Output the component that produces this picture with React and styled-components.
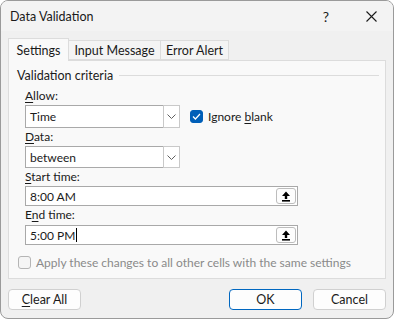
import React from "react";
import styled, { createGlobalStyle } from "styled-components";

const Global = createGlobalStyle`
  html, body { margin: 0; padding: 0; background: #ffffff; }
  body { font-family: Lato, "Noto Sans", sans-serif; font-size: 12px; color: #1b1b1b; }
  * { box-sizing: border-box; }
`;

const Window = styled.div`
  width: 394px;
  height: 319px;
  border: 1px solid #9a9a9a;
  border-radius: 8px;
  background: #f0f0f0;
  overflow: hidden;
  display: flex;
  flex-direction: column;
`;

const TitleBar = styled.div`
  height: 30px;
  display: flex;
  align-items: center;
  padding-left: 9px;
  background: #f3f3f3;
`;

const Title = styled.div`
  flex: 1;
  font-size: 12.5px;
  color: #1a1a1a;
`;

const TitleButton = styled.div`
  width: ${(p) => p.$w || 46}px;
  height: 30px;
  display: flex;
  align-items: center;
  justify-content: center;
  font-size: 14px;
  color: #1a1a1a;
`;

const Content = styled.div`
  flex: 1;
  display: flex;
  flex-direction: column;
  padding: 7px 7px 0 7px;
`;

const TabStrip = styled.div`
  display: flex;
  align-items: flex-end;
  height: 22px;
  position: relative;
  z-index: 1;
`;

const Tab = styled.div`
  height: ${(p) => (p.$active ? 23 : 20)}px;
  width: ${(p) => p.$w}px;
  display: flex;
  align-items: center;
  justify-content: center;
  border: 1px solid #dcdcdc;
  border-bottom: ${(p) => (p.$active ? "none" : "1px solid #dcdcdc")};
  border-left: ${(p) => (p.$first || p.$active ? "1px solid #dcdcdc" : "none")};
  background: ${(p) => (p.$active ? "#f9f9f9" : "#f4f4f4")};
  margin-bottom: ${(p) => (p.$active ? -1 : 0)}px;
  font-size: 12.5px;
  color: #1a1a1a;
`;

const Panel = styled.div`
  width: 378px;
  height: 219px;
  border: 1px solid #dcdcdc;
  background: #f9f9f9;
  padding: 6px 0 0 8px;
  display: flex;
  flex-direction: column;
`;

const GroupHeader = styled.div`
  display: flex;
  align-items: center;
  height: 16px;
  gap: 6px;
  padding-right: 6px;
  font-size: 12.5px;
  &::after {
    content: "";
    flex: 1;
    height: 1px;
    background: #dcdcdc;
  }
`;

const Indented = styled.div`
  padding-left: 8px;
  display: flex;
  flex-direction: column;
`;

const Label = styled.div`
  height: 16px;
  line-height: 16px;
  margin-top: ${(p) => p.$mt || 0}px;
  margin-bottom: ${(p) => p.$mb || 1}px;
  color: #1a1a1a;
`;

const U = styled.span`
  text-decoration: underline;
  text-underline-offset: 2px;
`;

const Row = styled.div`
  display: flex;
  align-items: center;
  gap: 10px;
`;

const Select = styled.div`
  width: 155px;
  height: ${(p) => p.$h || 22}px;
  border: 1px solid #a9a9a9;
  background: #ffffff;
  display: flex;
  align-items: center;
  padding-left: 4px;
`;

const SelectText = styled.div`
  flex: 1;
`;

const DropButton = styled.div`
  width: 17px;
  height: calc(100% + 2px);
  margin-right: -1px;
  border: 1px solid #c9c9c9;
  background: #ffffff;
  display: flex;
  align-items: center;
  justify-content: center;
`;

const Check = styled.div`
  width: 13px;
  height: 13px;
  border-radius: 3px;
  background: ${(p) => (p.$checked ? "#005fb8" : "#f5f5f5")};
  border: 1px solid ${(p) => (p.$checked ? "#005fb8" : "#b5b5b5")};
  display: flex;
  align-items: center;
  justify-content: center;
`;

const CheckRow = styled.div`
  display: flex;
  align-items: center;
  gap: 5px;
  color: ${(p) => (p.$disabled ? "#8a8a8a" : "#1a1a1a")};
`;

const TextBox = styled.div`
  width: 273px;
  height: 20px;
  border: 1px solid #a9a9a9;
  background: #ffffff;
  display: flex;
  align-items: center;
  padding-left: 4px;
  padding-right: 1px;
`;

const BoxText = styled.div`
  flex: 1;
  display: flex;
  align-items: center;
`;

const Caret = styled.span`
  display: inline-block;
  width: 1px;
  height: 14px;
  background: #000;
  margin-left: 1px;
`;

const RefButton = styled.div`
  width: 20px;
  height: 16px;
  border: 1px solid #bdbdbd;
  border-radius: 3px;
  background: #fdfdfd;
  display: flex;
  align-items: center;
  justify-content: center;
`;

const ApplyWrap = styled.div`
  margin-top: 10px;
  padding-left: 1px;
`;

const ButtonRow = styled.div`
  display: flex;
  align-items: center;
  margin-top: 10px;
`;

const Button = styled.div`
  width: 73px;
  height: 21px;
  border: 1px solid ${(p) => (p.$primary ? "#0067c0" : "#d0d0d0")};
  border-radius: 4px;
  background: #fdfdfd;
  display: flex;
  align-items: center;
  justify-content: center;
  margin-left: ${(p) => p.$ml || 0}px;
  font-size: 12.5px;
  color: #1a1a1a;
`;

const Chevron = () => (
  <svg width="9" height="5" viewBox="0 0 9 5">
    <path d="M0.5 0.5 L4.5 4.5 L8.5 0.5" fill="none" stroke="#606060" strokeWidth="1" />
  </svg>
);

const UpArrow = () => (
  <svg width="10" height="11" viewBox="0 0 10 11">
    <path d="M5 0.5 L9 5 L6.2 5 L6.2 8 L3.8 8 L3.8 5 L1 5 Z" fill="#000" />
    <rect x="1" y="9" width="8" height="1.6" fill="#000" />
  </svg>
);

const Tick = () => (
  <svg width="9" height="7" viewBox="0 0 9 7">
    <path d="M1 3.5 L3.4 6 L8 1" fill="none" stroke="#ffffff" strokeWidth="1.2" />
  </svg>
);

const CloseIcon = () => (
  <svg width="11" height="11" viewBox="0 0 11 11">
    <path d="M0.5 0.5 L10.5 10.5 M10.5 0.5 L0.5 10.5" stroke="#1a1a1a" strokeWidth="1.1" />
  </svg>
);

export default function App() {
  return (
    <>
      <Global />
      <Window>
        <TitleBar>
          <Title>Data Validation</Title>
          <TitleButton $w={46}>?</TitleButton>
          <TitleButton $w={44}>
            <CloseIcon />
          </TitleButton>
        </TitleBar>
        <Content>
          <TabStrip>
            <Tab $active $first $w={61}>Settings</Tab>
            <Tab $w={92}>Input Message</Tab>
            <Tab $w={68}>Error Alert</Tab>
          </TabStrip>
          <Panel>
            <GroupHeader>Validation criteria</GroupHeader>
            <Indented>
              <Label $mt={5}>
                <U>A</U>llow:
              </Label>
              <Row>
                <Select $h={23}>
                  <SelectText>Time</SelectText>
                  <DropButton>
                    <Chevron />
                  </DropButton>
                </Select>
                <CheckRow>
                  <Check $checked>
                    <Tick />
                  </Check>
                  <span>
                    Ignore <U>b</U>lank
                  </span>
                </CheckRow>
              </Row>
              <Label $mt={1}>
                <U>D</U>ata:
              </Label>
              <Select $h={22}>
                <SelectText>between</SelectText>
                <DropButton>
                  <Chevron />
                </DropButton>
              </Select>
              <Label $mt={1}>
                <U>S</U>tart time:
              </Label>
              <TextBox>
                <BoxText>8:00 AM</BoxText>
                <RefButton>
                  <UpArrow />
                </RefButton>
              </TextBox>
              <Label $mt={1} $mb={2}>
                E<U>n</U>d time:
              </Label>
              <TextBox>
                <BoxText>
                  5:00 PM<Caret />
                </BoxText>
                <RefButton>
                  <UpArrow />
                </RefButton>
              </TextBox>
            </Indented>
            <ApplyWrap>
              <CheckRow $disabled>
                <Check />
                <span>Apply these changes to all other cells with the same settings</span>
              </CheckRow>
            </ApplyWrap>
          </Panel>
          <ButtonRow>
            <Button>
              <span>
                <U>C</U>lear All
              </span>
            </Button>
            <Button $primary $ml={148}>OK</Button>
            <Button $ml={11}>Cancel</Button>
          </ButtonRow>
        </Content>
      </Window>
    </>
  );
}
